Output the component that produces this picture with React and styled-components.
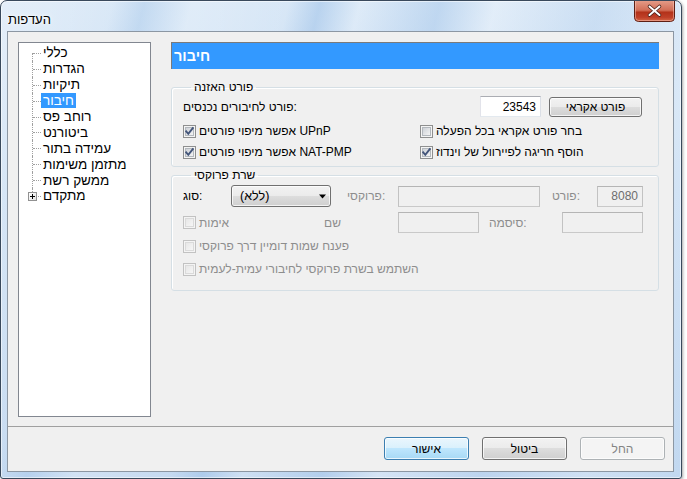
import React, { useId } from 'react';
import styled, { createGlobalStyle } from 'styled-components';

const Global = createGlobalStyle`
  html, body { margin: 0; padding: 0; background: #ffffff; }
  body {
    font-family: "Liberation Sans", "DejaVu Sans", sans-serif;
    font-size: 12px;
    color: #000;
    direction: ltr;
  }
  #root { width: 687px; height: 479px; overflow: hidden; }
  * { box-sizing: border-box; }
`;

const UI_FONT = `"Liberation Sans", "DejaVu Sans", sans-serif`;

const Window = styled.div`
  width: 682px;
  height: 479px;
  border: 1px solid #39495c;
  border-radius: 7px 7px 3px 3px;
  display: flex;
  flex-direction: column;
  background:
    linear-gradient(104deg,
      rgba(255,255,255,0.35) 0%,
      rgba(255,255,255,0.1) 14%,
      rgba(160,195,232,0.35) 18%,
      rgba(255,255,255,0.25) 24%,
      rgba(255,255,255,0.05) 36%,
      rgba(150,188,230,0.45) 40%,
      rgba(255,255,255,0.2) 45%,
      rgba(150,188,230,0.35) 55%,
      rgba(255,255,255,0.3) 62%,
      rgba(170,200,235,0.25) 75%,
      rgba(255,255,255,0.2) 88%,
      rgba(190,215,240,0.2) 100%),
    linear-gradient(180deg, #d6e6f6 0%, #cadef3 40%, #c2d8f0 100%);
  box-shadow: inset 0 0 0 1px rgba(255,255,255,0.55), 1px 1px 3px rgba(0,0,0,0.35);
  overflow: hidden;
`;

const TitleBar = styled.div`
  height: 30px;
  flex: none;
  display: flex;
  justify-content: space-between;
  align-items: flex-start;
  padding: 0 6px 0 7px;
`;

const TitleText = styled.span`
  margin-top: 11px;
  font-family: ${UI_FONT};
  font-size: 13px;
  color: #000;
  text-shadow: 0 0 6px #fff, 0 0 3px #fff;
`;

const CloseSlot = styled.div`
  width: 41px;
  height: 21px;
  flex: none;
  display: flex;
`;

const Client = styled.div`
  margin-left: 6px;
  width: 667px;
  height: 441px;
  border: 1px solid #8c97a3;
  background: #f0f0f0;
  display: flex;
  flex-direction: column;
`;

const Main = styled.div`
  height: 394px;
  display: flex;
  padding: 10px 0 0 10px;
  gap: 20px;
`;

const Tree = styled.div`
  width: 133px;
  height: 375px;
  border: 1px solid #828790;
  background: #fff;
  padding: 2px 0 0 0;
  flex: none;
`;

const TreeItem = styled.div`
  position: relative;
  height: 15.9px;
  display: flex;
  align-items: center;
  padding-left: 22px;
  &::before {
    content: "";
    position: absolute;
    left: 13px;
    top: ${p => (p.$first ? '8px' : '0')};
    bottom: ${p => (p.$last ? '8px' : '0')};
    border-left: 1px dotted #a0a0a0;
  }
  &::after {
    content: "";
    position: absolute;
    left: 14px;
    width: 8px;
    top: 8px;
    border-top: 1px dotted #a0a0a0;
  }
`;

const TreeLabel = styled.span`
  font-size: 13.5px;
  line-height: 15px;
  padding: 0 2px;
  color: ${p => (p.$selected ? '#fff' : '#000')};
  background: ${p => (p.$selected ? '#3399ff' : 'transparent')};
`;

const Expander = styled.span`
  position: absolute;
  left: 9px;
  top: 4px;
  width: 9px;
  height: 9px;
  border: 1px solid #919191;
  background: linear-gradient(135deg, #ffffff, #e2e2e2);
  z-index: 1;
  display: flex;
  align-items: center;
  justify-content: center;
`;

const Panel = styled.div`
  width: 488px;
  display: flex;
  flex-direction: column;
`;

const Header = styled.div`
  height: 27px;
  background: #3399ff;
  border-top: 1px solid #7a7a7a;
  border-left: 1px solid #7a7a7a;
  color: #fff;
  font-weight: bold;
  font-size: 14.5px;
  display: flex;
  align-items: center;
  padding-left: 2px;
`;

const Group = styled.fieldset`
  margin: ${p => p.$mt}px 0 0 0;
  padding: ${p => p.$pt}px 16px ${p => p.$pb}px 11px;
  border: 1px solid #d5dfe5;
  border-radius: 3px;
  box-shadow: inset 1px 1px 0 #fff;
  min-width: 0;
`;

const Legend = styled.legend`
  padding: 0 3px;
  margin-left: 8px;
  font-size: 12px;
  line-height: 14px;
  color: #000;
`;

const Row = styled.div`
  display: flex;
  align-items: center;
  height: ${p => p.$h}px;
  margin-top: ${p => p.$mt || 0}px;
`;

const TwoCols = styled.div`
  display: grid;
  grid-template-columns: 237px 1fr;
  align-items: center;
  height: ${p => p.$h}px;
  margin-top: ${p => p.$mt || 0}px;
`;

const Label = styled.span`
  font-size: 12px;
  white-space: nowrap;
  color: ${p => (p.$disabled ? '#8d8d8d' : '#000')};
  width: ${p => (p.$w ? `${p.$w}px` : 'auto')};
  margin-left: ${p => p.$ml || 0}px;
  flex: ${p => (p.$grow ? 1 : 'none')};
`;

const TextBox = styled.div`
  width: ${p => p.$w}px;
  height: 21px;
  margin-left: ${p => p.$ml || 0}px;
  flex: none;
  border: 1px solid ${p => (p.$disabled ? '#b5b5b5' : '#abadb3')};
  border-bottom-color: ${p => (p.$disabled ? '#c9c9c9' : '#e3e9ef')};
  border-left-color: ${p => (p.$disabled ? '#c2c2c2' : '#e2e3ea')};
  border-right-color: ${p => (p.$disabled ? '#c2c2c2' : '#dbdfe6')};
  background: ${p => (p.$disabled ? '#f0f0f0' : '#fff')};
  color: ${p => (p.$disabled ? '#6d6d6d' : '#000')};
  display: flex;
  align-items: center;
  justify-content: flex-end;
  padding-right: 4px;
  font-size: 12px;
`;

const Button = styled.div`
  width: ${p => p.$w}px;
  height: ${p => p.$h || 23}px;
  margin-left: ${p => p.$ml || 0}px;
  flex: none;
  border: 1px solid ${p => (p.$variant === 'default' ? '#3c7fb1' : p.$variant === 'disabled' ? '#adb2b5' : '#707070')};
  border-radius: 3px;
  background: ${p =>
    p.$variant === 'default'
      ? 'linear-gradient(180deg, #eaf6fd 0%, #d9f0fc 50%, #bee6fd 50%, #a7d9f5 100%)'
      : p.$variant === 'disabled'
      ? '#f4f4f4'
      : 'linear-gradient(180deg, #f2f2f2 0%, #ebebeb 50%, #dddddd 50%, #cfcfcf 100%)'};
  box-shadow: inset 0 0 0 1px ${p => (p.$variant === 'disabled' ? '#fcfcfc' : 'rgba(255,255,255,0.75)')};
  color: ${p => (p.$variant === 'disabled' ? '#838383' : '#000')};
  display: flex;
  align-items: center;
  justify-content: center;
  font-size: 12px;
`;

const Combo = styled.div`
  width: 100px;
  height: 22px;
  flex: none;
  border: 1px solid #707070;
  border-radius: 3px;
  background: linear-gradient(180deg, #f2f2f2 0%, #ebebeb 50%, #dddddd 50%, #cfcfcf 100%);
  box-shadow: inset 0 0 0 1px rgba(255,255,255,0.75);
  display: flex;
  align-items: center;
  justify-content: space-between;
  padding: 0 3px 0 8px;
  font-size: 12.5px;
`;

const CheckItem = styled.div`
  display: flex;
  align-items: center;
  gap: 3px;
  width: ${p => (p.$w ? `${p.$w}px` : 'auto')};
  flex: none;
  color: ${p => (p.$disabled ? '#8d8d8d' : '#000')};
  font-size: 12px;
  white-space: nowrap;
`;

const Footer = styled.div`
  flex: 1;
  border-top: 1px solid #a0a0a0;
  display: flex;
  justify-content: flex-end;
  align-items: flex-start;
  padding: 10px 8px 0 0;
  gap: 13px;
`;

function CloseIcon() {
  const id = useId().replace(/:/g, '');
  return (
    <svg width="41" height="21" viewBox="0 0 41 21">
      <defs>
        <linearGradient id={`c${id}`} x1="0" y1="0" x2="0" y2="1">
          <stop offset="0" stopColor="#e49a86" />
          <stop offset="0.45" stopColor="#d26e57" />
          <stop offset="0.55" stopColor="#b3321a" />
          <stop offset="0.8" stopColor="#bf4028" />
          <stop offset="1" stopColor="#d66a48" />
        </linearGradient>
      </defs>
      <path d="M0.5 0 V16.5 Q0.5 20.5 4.5 20.5 H36.5 Q40.5 20.5 40.5 16.5 V0" fill={`url(#c${id})`} stroke="#5e1f14" />
      <path d="M1.5 0 V16.5 Q1.5 19.5 4.5 19.5 H36.5 Q39.5 19.5 39.5 16.5 V0" fill="none" stroke="rgba(255,210,200,0.45)" />
      <path d="M15.5 5.5 L25.5 14 M25.5 5.5 L15.5 14" stroke="#4a2018" strokeWidth="3.6" strokeLinecap="round" />
      <path d="M15.5 5.5 L25.5 14 M25.5 5.5 L15.5 14" stroke="#ffffff" strokeWidth="2" strokeLinecap="round" />
    </svg>
  );
}

function CheckBox({ checked, disabled }) {
  const id = useId().replace(/:/g, '');
  return (
    <svg width="13" height="13" viewBox="0 0 13 13" style={{ flex: 'none' }}>
      <defs>
        <linearGradient id={`g${id}`} x1="0" y1="0" x2="1" y2="1">
          <stop offset="0" stopColor={disabled ? '#e6e6e6' : '#cbcfd5'} />
          <stop offset="1" stopColor={disabled ? '#f7f7f7' : '#f6f6f6'} />
        </linearGradient>
      </defs>
      <rect x="0.5" y="0.5" width="12" height="12" fill="#f4f4f4" stroke={disabled ? '#c2c2c2' : '#8e8f8f'} />
      <rect x="2.5" y="2.5" width="8" height="8" fill={`url(#g${id})`} stroke={disabled ? '#dadada' : '#b3b8bd'} />
      {checked && (
        <path d="M3.2 6.4 L5.3 8.8 L9.8 3.2" fill="none" stroke="#43557a" strokeWidth="1.9" strokeLinecap="square" />
      )}
    </svg>
  );
}

const treeItems = ['כללי', 'הגדרות', 'תיקיות', 'חיבור', 'רוחב פס', 'ביטורנט', 'עמידה בתור', 'מתזמן משימות', 'ממשק רשת', 'מתקדם'];

export default function App() {
  return (
    <>
      <Global />
      <Window>
        <TitleBar>
          <TitleText>העדפות</TitleText>
          <CloseSlot>
            <CloseIcon />
          </CloseSlot>
        </TitleBar>
        <Client>
          <Main>
            <Tree>
              {treeItems.map((t, i) => (
                <TreeItem key={t} $first={i === 0} $last={i === treeItems.length - 1}>
                  {i === treeItems.length - 1 && (
                    <Expander>
                      <svg width="7" height="7" viewBox="0 0 7 7">
                        <path d="M1 3.5 H6 M3.5 1 V6" stroke="#000" strokeWidth="1" />
                      </svg>
                    </Expander>
                  )}
                  <TreeLabel $selected={t === 'חיבור'}>{t}</TreeLabel>
                </TreeItem>
              ))}
            </Tree>
            <Panel>
              <Header>חיבור</Header>
              <Group $mt={11} $pt={2} $pb={5}>
                <Legend>פורט האזנה</Legend>
                <Row $h={21}>
                  <Label $grow>פורט לחיבורים נכנסים:</Label>
                  <TextBox $w={61}>23543</TextBox>
                  <Button $w={93} $h={20} $ml={8}>פורט אקראי</Button>
                </Row>
                <TwoCols $h={18} $mt={5}>
                  <CheckItem><CheckBox checked />אפשר מיפוי פורטים UPnP</CheckItem>
                  <CheckItem><CheckBox />בחר פורט אקראי בכל הפעלה</CheckItem>
                </TwoCols>
                <TwoCols $h={18} $mt={3}>
                  <CheckItem><CheckBox checked />אפשר מיפוי פורטים NAT-PMP</CheckItem>
                  <CheckItem><CheckBox checked />הוסף חריגה לפיירוול של וינדוז</CheckItem>
                </TwoCols>
              </Group>
              <Group $mt={1} $pt={3} $pb={12}>
                <Legend>שרת פרוקסי</Legend>
                <Row $h={22}>
                  <Label $w={48}>סוג:</Label>
                  <Combo>
                    <span>(ללא)</span>
                    <svg width="9" height="5" viewBox="0 0 9 5"><path d="M1 0.5 H8 L4.5 4.5 Z" fill="#000" /></svg>
                  </Combo>
                  <Label $w={51} $ml={16} $disabled>פרוקסי:</Label>
                  <TextBox $w={142} $disabled />
                  <Label $w={45} $ml={12} $disabled>פורט:</Label>
                  <TextBox $w={46} $disabled>8080</TextBox>
                </Row>
                <Row $h={21} $mt={5}>
                  <CheckItem $w={141} $disabled><CheckBox disabled />אימות</CheckItem>
                  <Label $w={74} $disabled>שם</Label>
                  <TextBox $w={81} $disabled />
                  <Label $w={73} $ml={10} $disabled>סיסמה:</Label>
                  <TextBox $w={81} $disabled />
                </Row>
                <Row $h={18} $mt={4}>
                  <CheckItem $disabled><CheckBox disabled />פענח שמות דומיין דרך פרוקסי</CheckItem>
                </Row>
                <Row $h={18} $mt={5}>
                  <CheckItem $disabled><CheckBox disabled />השתמש בשרת פרוקסי לחיבורי עמית-לעמית</CheckItem>
                </Row>
              </Group>
            </Panel>
          </Main>
          <Footer>
            <Button $w={85} $variant="default">אישור</Button>
            <Button $w={85}>ביטול</Button>
            <Button $w={85} $variant="disabled">החל</Button>
          </Footer>
        </Client>
      </Window>
    </>
  );
}
